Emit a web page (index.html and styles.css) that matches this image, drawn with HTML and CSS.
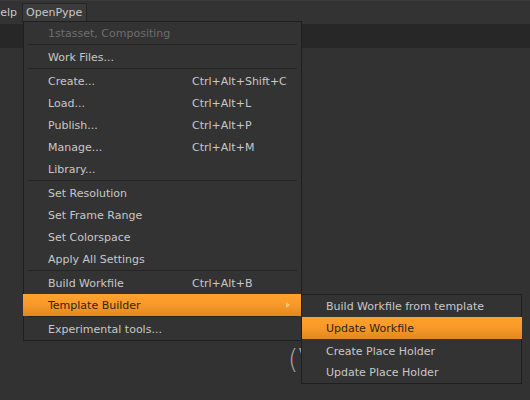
FILE: index.html
```html
<!DOCTYPE html>
<html>
<head>
<meta charset="utf-8">
<link rel="stylesheet" href="styles.css">
</head>
<body>
<div class="menubar">
  <span class="mb-item mb-help">Help</span>
  <span class="mb-item mb-active">OpenPype</span>
</div>
<div class="band"></div>
<div class="canvas">
  <div class="bg-text">(V</div>
</div>

<div class="menu main-menu">
  <div class="row disabled"><span class="label">1stasset, Compositing</span></div>
  <div class="sep"></div>
  <div class="row"><span class="label">Work Files...</span></div>
  <div class="sep"></div>
  <div class="row"><span class="label">Create...</span><span class="key">Ctrl+Alt+Shift+C</span></div>
  <div class="row"><span class="label">Load...</span><span class="key">Ctrl+Alt+L</span></div>
  <div class="row"><span class="label">Publish...</span><span class="key">Ctrl+Alt+P</span></div>
  <div class="row"><span class="label">Manage...</span><span class="key">Ctrl+Alt+M</span></div>
  <div class="row"><span class="label">Library...</span></div>
  <div class="sep"></div>
  <div class="row"><span class="label">Set Resolution</span></div>
  <div class="row"><span class="label">Set Frame Range</span></div>
  <div class="row"><span class="label">Set Colorspace</span></div>
  <div class="row"><span class="label">Apply All Settings</span></div>
  <div class="sep"></div>
  <div class="row"><span class="label">Build Workfile</span><span class="key">Ctrl+Alt+B</span></div>
  <div class="row active"><span class="label">Template Builder</span><span class="arrow"></span></div>
  <div class="sep"></div>
  <div class="row"><span class="label">Experimental tools...</span></div>
</div>

<div class="menu sub-menu">
  <div class="row"><span class="label">Build Workfile from template</span></div>
  <div class="row active"><span class="label">Update Workfile</span></div>
  <div class="row lower"><span class="label">Create Place Holder</span></div>
  <div class="row"><span class="label">Update Place Holder</span></div>
</div>
</body>
</html>
```

FILE: styles.css
```css
html, body {
  margin: 0;
  padding: 0;
  background: #323232;
  width: 530px;
  height: 400px;
  overflow: hidden;
  font-family: "DejaVu Sans", "Liberation Sans", sans-serif;
  font-size: 11px;
  color: #c8c8c8;
}

.menubar {
  height: 24px;
  box-sizing: border-box;
  border-top: 1px solid #373b3e;
  background: #333333;
  display: flex;
  align-items: flex-start;
}

.mb-item {
  display: block;
  height: 19px;
  line-height: 17px;
  box-sizing: border-box;
  margin-top: 2px;
  padding: 0 4px 0 3px;
  border: 1px solid transparent;
  color: #c8c8c8;
}

.mb-help {
  margin-left: -13px;
  padding: 0 4px 0 4px;
}

.mb-active {
  background: #3b3b3b;
  border-color: #262626;
}

.band {
  height: 24px;
  background: #272727;
}

.canvas {
  position: relative;
  height: 352px;
}

.bg-text {
  position: absolute;
  left: 288px;
  top: 296px;
  font-family: "DejaVu Sans", sans-serif;
  font-weight: 300;
  font-size: 26px;
  color: #a9a9a9;
  line-height: 30px;
}

.menu {
  position: absolute;
  box-sizing: border-box;
  background: #333333;
  border: 1px solid #1f1f1f;
}

.main-menu {
  left: 23px;
  top: 21px;
  width: 279px;
}

.sub-menu {
  left: 301px;
  top: 294px;
  width: 221px;
}

.row {
  height: 22px;
  line-height: 24px;
  display: flex;
  position: relative;
  white-space: nowrap;
  overflow: hidden;
}

.main-menu .row {
  padding-left: 24px;
}

.main-menu .label {
  width: 144px;
}

.sub-menu .row {
  padding-left: 24px;
}

.sub-menu .row.lower {
  line-height: 25px;
}

.row.disabled {
  color: #6e6e6e;
}

.row.active {
  background: linear-gradient(to bottom, #ffa22c 0%, #f8982a 50%, #e1881c 100%);
  color: #2e2414;
}

.main-menu .row.active {
  margin: 0 -1px;
  padding-left: 25px;
}

.sub-menu .row.active {
  margin: 0 -1px 0 0;
}

.arrow {
  position: absolute;
  right: 12px;
  top: 8px;
  width: 0;
  height: 0;
  border-top: 3px solid transparent;
  border-bottom: 3px solid transparent;
  border-left: 4px solid rgba(255, 235, 200, 0.55);
}

.sep {
  height: 1px;
  background: #252525;
  margin: 0 4px 1px 4px;
}
```
